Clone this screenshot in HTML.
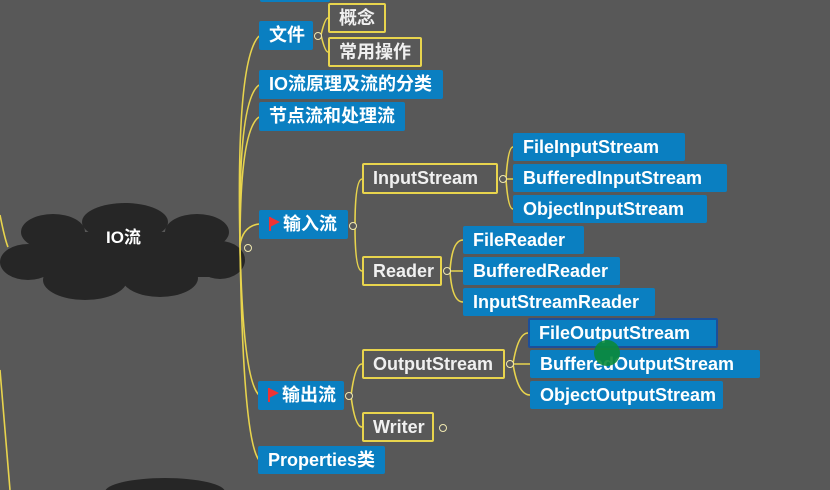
<!DOCTYPE html>
<html><head><meta charset="utf-8"><style>
body{margin:0;width:830px;height:490px;background:#585858;overflow:hidden;position:relative;font-family:"Liberation Sans","Noto Sans CJK SC",sans-serif;}
.b{position:absolute;box-sizing:border-box;background:#0a7fc1;color:#fff;font-weight:bold;font-size:18px;line-height:28px;padding-left:10px;border-radius:2px;white-space:nowrap;}
.o{position:absolute;box-sizing:border-box;border:2px solid #e8d44d;color:#f0f0f0;font-weight:bold;font-size:18px;padding-left:9px;border-radius:2px;white-space:nowrap;}
.d{position:absolute;width:6px;height:6px;border-radius:50%;background:#585858;border:1.5px solid #f0e8b0;}
.flag{display:inline-block;vertical-align:-2px;margin-right:2px}
</style></head><body>
<svg width="830" height="490" style="position:absolute;left:0;top:0">
<g fill="#262626">
<ellipse cx="125" cy="222" rx="43" ry="19"/>
<ellipse cx="53" cy="232" rx="32" ry="18"/>
<ellipse cx="197" cy="232" rx="32" ry="18"/>
<ellipse cx="28" cy="262" rx="28" ry="18"/>
<ellipse cx="220" cy="260" rx="25" ry="19"/>
<ellipse cx="85" cy="280" rx="42" ry="20"/>
<ellipse cx="160" cy="278" rx="38" ry="19"/>
<rect x="40" y="232" width="170" height="45"/>
<ellipse cx="165" cy="492" rx="60" ry="14"/>
</g>
<g stroke="#e8d44d" stroke-width="1.6" fill="none">
<path d="M0 215 Q5 240 8 247"/>
<path d="M0 370 Q5 430 10 490"/>
<path d="M240 245 Q236 60 259 36"/>
<path d="M240 245 Q238 100 259 85"/>
<path d="M240 245 Q240 130 259 117"/>
<path d="M240 245 Q243 226 259 224"/>
<path d="M240 245 Q243 380 259 395"/>
<path d="M240 245 Q243 440 259 460"/>
<path d="M321 35 Q325 18 328 18 M321 35 Q325 52 328 52"/>
<path d="M355 226 Q355 180 362 179 M355 226 Q355 271 362 271"/>
<path d="M351 396 Q355 364 362 364 M351 396 Q355 427 362 427"/>
<path d="M506 179 Q508 147 513 147 M506 179 L513 179 M506 179 Q508 209 513 209"/>
<path d="M450 271 Q452 240 463 240 M450 271 L463 271 M450 271 Q452 302 463 302"/>
<path d="M513 364 Q518 333 528 333 M513 364 L530 364 M513 364 Q518 395 530 395"/>
</g>
</svg>
<div class="b" style="left:260px;top:-10px;width:70px;height:12px"></div>
<div style="position:absolute;left:0;top:221px;width:247px;text-align:center;color:#fff;font-weight:bold;font-size:17px;line-height:34px">IO流</div>
<div class="d" style="left:244px;top:244px"></div>
<div class="b" style="left:259px;top:21px;width:54px;height:29px">文件</div><div class="d" style="left:314px;top:32px"></div>
<div class="o" style="left:328px;top:3px;width:58px;height:30px;line-height:26px">概念</div>
<div class="o" style="left:328px;top:37px;width:94px;height:30px;line-height:26px">常用操作</div>
<div class="b" style="left:259px;top:70px;width:184px;height:29px">IO流原理及流的分类</div>
<div class="b" style="left:259px;top:102px;width:146px;height:29px">节点流和处理流</div>
<div class="b" style="left:259px;top:210px;width:89px;height:29px"><svg class="flag" width="12" height="16"><path d="M1 1 L1 15" stroke="#e33" stroke-width="2"/><path d="M1 1 L11 6 L1 11 Z" fill="#e33"/></svg>输入流</div><div class="d" style="left:349px;top:222px"></div>
<div class="o" style="left:362px;top:163px;width:136px;height:31px;line-height:27px">InputStream</div><div class="d" style="left:499px;top:175px"></div>
<div class="b" style="left:513px;top:133px;width:172px;height:28px">FileInputStream</div>
<div class="b" style="left:513px;top:164px;width:214px;height:28px">BufferedInputStream</div>
<div class="b" style="left:513px;top:195px;width:194px;height:28px">ObjectInputStream</div>
<div class="o" style="left:362px;top:256px;width:80px;height:30px;line-height:26px">Reader</div><div class="d" style="left:443px;top:267px"></div>
<div class="b" style="left:463px;top:226px;width:121px;height:28px">FileReader</div>
<div class="b" style="left:463px;top:257px;width:157px;height:28px">BufferedReader</div>
<div class="b" style="left:463px;top:288px;width:192px;height:28px">InputStreamReader</div>
<div class="b" style="left:258px;top:381px;width:86px;height:29px"><svg class="flag" width="12" height="16"><path d="M1 1 L1 15" stroke="#e33" stroke-width="2"/><path d="M1 1 L11 6 L1 11 Z" fill="#e33"/></svg>输出流</div><div class="d" style="left:345px;top:392px"></div>
<div class="o" style="left:362px;top:349px;width:143px;height:30px;line-height:26px">OutputStream</div><div class="d" style="left:506px;top:360px"></div>
<div class="b" style="left:528px;top:318px;width:190px;height:30px;border:2px solid #1c4f9a;padding-left:9px;line-height:26px">FileOutputStream</div>
<div class="b" style="left:530px;top:350px;width:230px;height:28px">BufferedOutputStream</div>
<div class="b" style="left:530px;top:381px;width:193px;height:28px">ObjectOutputStream</div>
<div class="o" style="left:362px;top:412px;width:72px;height:30px;line-height:26px">Writer</div><div class="d" style="left:439px;top:424px"></div>
<div class="b" style="left:258px;top:446px;width:127px;height:28px">Properties类</div>
<div style="position:absolute;left:594px;top:340px;width:26px;height:26px;border-radius:50%;background:#0a8a3a;opacity:.9"></div>
</body></html>
